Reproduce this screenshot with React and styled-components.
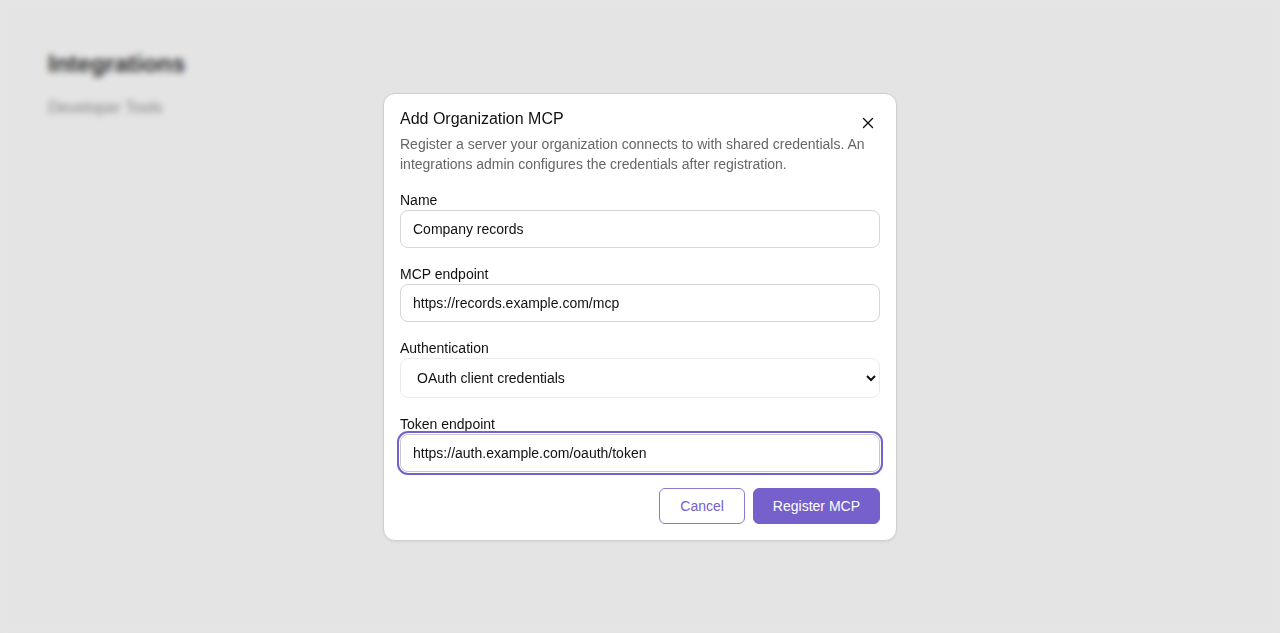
import React, { useEffect, useRef } from 'react';
import styled, { createGlobalStyle } from 'styled-components';

const GlobalStyle = createGlobalStyle`
  * { box-sizing: border-box; }
  html, body {
    margin: 0;
    height: 100%;
    font-family: "Liberation Sans", Arial, sans-serif;
    background: #fefefe;
  }
  #root { min-height: 100%; }
`;

const Page = styled.div`
  padding: 48px;
  min-height: 100vh;
`;

const PageTitle = styled.h1`
  margin: 0 0 19px;
  font-size: 24px;
  line-height: 32px;
  font-weight: 700;
  color: #333;
`;

const PageSubtitle = styled.p`
  margin: 0;
  font-size: 16px;
  line-height: 18px;
  color: #999;
`;

const Overlay = styled.div`
  position: fixed;
  inset: 0;
  display: flex;
  align-items: center;
  justify-content: center;
  background: rgba(0, 0, 0, 0.1);
  backdrop-filter: blur(3px);
`;

const Dialog = styled.div`
  width: 514px;
  padding: 16px;
  background: #fff;
  border: 1px solid #cfcfcf;
  border-radius: 12px;
  box-shadow: 0 1px 3px rgba(0, 0, 0, 0.08);
`;

const Header = styled.div`
  display: flex;
  align-items: flex-start;
  justify-content: space-between;
  gap: 12px;
`;

const Title = styled.h2`
  margin: 0;
  font-size: 16px;
  line-height: 18px;
  font-weight: 400;
  color: #111;
`;

const CloseButton = styled.button`
  display: flex;
  align-items: center;
  justify-content: center;
  width: 24px;
  height: 24px;
  margin-top: 1px;
  padding: 0;
  border: none;
  background: transparent;
  color: #111;
  cursor: pointer;
`;

const Description = styled.p`
  margin: -1px 0 0;
  font-size: 14px;
  line-height: 20px;
  color: #666;
`;

const Form = styled.form`
  display: flex;
  flex-direction: column;
  gap: 18px;
  margin-top: 18px;
`;

const Field = styled.label`
  display: flex;
  flex-direction: column;
  gap: 1px;
`;

const LabelText = styled.span`
  font-size: 14px;
  line-height: 17px;
  color: #111;
`;

const TextInput = styled.input`
  height: 38px;
  padding: 0 12px;
  border: 1px solid ${p => (p.$focused ? '#c8c8c8' : '#d6d6d6')};
  border-radius: 8px;
  font-family: inherit;
  font-size: 14px;
  color: #111;
  caret-color: #111;
  background: #fff;
  outline: ${p => (p.$focused ? '2px solid #7660cb' : 'none')};
  outline-offset: 1px;
  &:focus {
    outline: 2px solid #7660cb;
    outline-offset: 1px;
  }
`;

const Select = styled.select`
  height: 40px;
  padding: 0 12px;
  border: 1px solid #ececec;
  border-radius: 8px;
  font-family: inherit;
  font-size: 14px;
  color: #111;
  background: #fff;
  outline: none;
`;

const Actions = styled.div`
  display: flex;
  justify-content: flex-end;
  gap: 8px;
  margin-top: -2px;
`;

const Button = styled.button`
  height: 36px;
  padding: 0 ${p => (p.$primary ? '19px' : '20px')};
  border-radius: 6px;
  font-family: inherit;
  font-size: 14px;
  cursor: pointer;
  border: 1px solid ${p => (p.$primary ? '#7660cb' : '#8a78d4')};
  background: ${p => (p.$primary ? '#7660cb' : '#fff')};
  color: ${p => (p.$primary ? '#fff' : '#7660cb')};
`;

const CloseIcon = () => (
  <svg width="14" height="14" viewBox="0 0 14 14" fill="none" stroke="currentColor" strokeWidth="1.4" strokeLinecap="round">
    <path d="M2.5 2.5l9 9M11.5 2.5l-9 9" />
  </svg>
);

export default function App() {
  const tokenRef = useRef(null);

  useEffect(() => {
    const el = tokenRef.current;
    if (el) {
      el.focus();
      el.setSelectionRange(el.value.length, el.value.length);
    }
  }, []);

  return (
    <>
      <GlobalStyle />
      <Page>
        <PageTitle>Integrations</PageTitle>
        <PageSubtitle>Developer Tools</PageSubtitle>
      </Page>
      <Overlay>
        <Dialog role="dialog" aria-modal="true">
          <Header>
            <Title>Add Organization MCP</Title>
            <CloseButton type="button" aria-label="Close">
              <CloseIcon />
            </CloseButton>
          </Header>
          <Description>
            Register a server your organization connects to with shared credentials. An integrations admin configures the credentials after registration.
          </Description>
          <Form onSubmit={e => e.preventDefault()}>
            <Field>
              <LabelText>Name</LabelText>
              <TextInput defaultValue="Company records" />
            </Field>
            <Field>
              <LabelText>MCP endpoint</LabelText>
              <TextInput defaultValue="https://records.example.com/mcp" />
            </Field>
            <Field>
              <LabelText>Authentication</LabelText>
              <Select defaultValue="oauth">
                <option value="none">None</option>
                <option value="oauth">OAuth client credentials</option>
                <option value="key">API key</option>
              </Select>
            </Field>
            <Field>
              <LabelText>Token endpoint</LabelText>
              <TextInput ref={tokenRef} $focused defaultValue="https://auth.example.com/oauth/token" />
            </Field>
            <Actions>
              <Button type="button">Cancel</Button>
              <Button type="submit" $primary>Register MCP</Button>
            </Actions>
          </Form>
        </Dialog>
      </Overlay>
    </>
  );
}
